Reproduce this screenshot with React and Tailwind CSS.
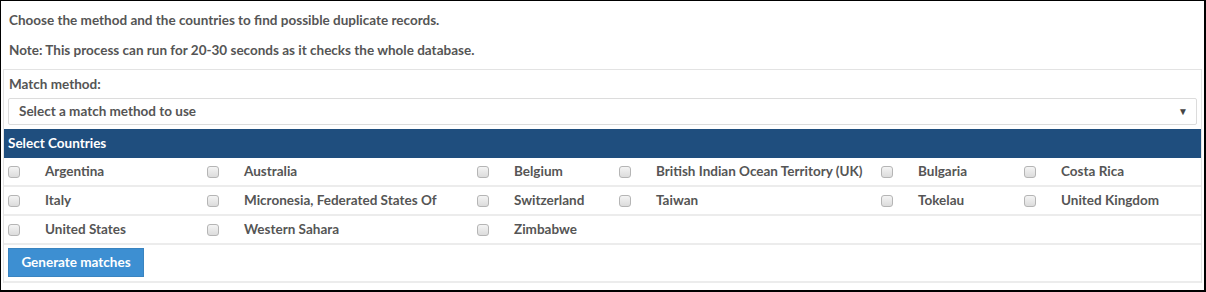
import React from 'react'

const rows = [
  ['Argentina', 'Australia', 'Belgium', 'British Indian Ocean Territory (UK)', 'Bulgaria', 'Costa Rica'],
  ['Italy', 'Micronesia, Federated States Of', 'Switzerland', 'Taiwan', 'Tokelau', 'United Kingdom'],
  ['United States', 'Western Sahara', 'Zimbabwe', null, null, null],
]

const Box = () => (
  <span className="block w-[12px] h-[12px] rounded-[3px] border border-[#b5b5b5] bg-gradient-to-b from-[#f4f4f4] to-[#dcdcdc]" />
)

const App = () => {
  return (
    <div className="w-[1206px] h-[292px] bg-white font-['Lato',sans-serif] font-bold text-[13.5px] text-[#555] border-l border-t border-r-2 border-b-2 border-black pl-[2px] pr-[2px] pt-[11px]">
      <p className="pl-[6px] h-[17px] leading-[17px]">Choose the method and the countries to find possible duplicate records.</p>
      <p className="pl-[6px] mt-[13px] h-[17px] leading-[17px]">Note: This process can run for 20-30 seconds as it checks the whole database.</p>

      <div className="mt-[10px] border border-[#e3e3e3] w-[1199px] h-[214px]">
        <div className="px-[4px] pt-[6px] pb-[4px]">
          <div className="pl-[1px] h-[17px] leading-[17px]">Match method:</div>
          <div className="mt-[5px] h-[27px] border border-[#dcdcdc] rounded-[2px] flex items-center justify-between pl-[10px] pr-[8px]">
            <span>Select a match method to use</span>
            <span className="text-[10px] text-[#444]">▼</span>
          </div>
        </div>

        <div className="bg-[#1f4e7e] text-white h-[29px] flex items-center pl-[4px]">Select Countries</div>

        <div>
          {rows.map((row, i) => (
            <div key={i} className="grid grid-cols-[37px_162px_37px_233px_37px_105px_37px_225px_37px_106px_37px_1fr] h-[29px] items-center border-b-2 border-[#ececec] pl-[4px]">
              {row.map((c, j) => (
                <React.Fragment key={j}>
                  <span>{c && <Box />}</span>
                  <span className="whitespace-nowrap">{c}</span>
                </React.Fragment>
              ))}
            </div>
          ))}
        </div>

        <div className="pl-[4px] pt-[3px] pb-[4px] border-b-2 border-[#ececec]">
          <button className="bg-[#3d8fd2] text-white h-[29px] w-[136px] border border-[#3a84c0] leading-none">Generate matches</button>
        </div>
      </div>
    </div>
  )
}

export default App
